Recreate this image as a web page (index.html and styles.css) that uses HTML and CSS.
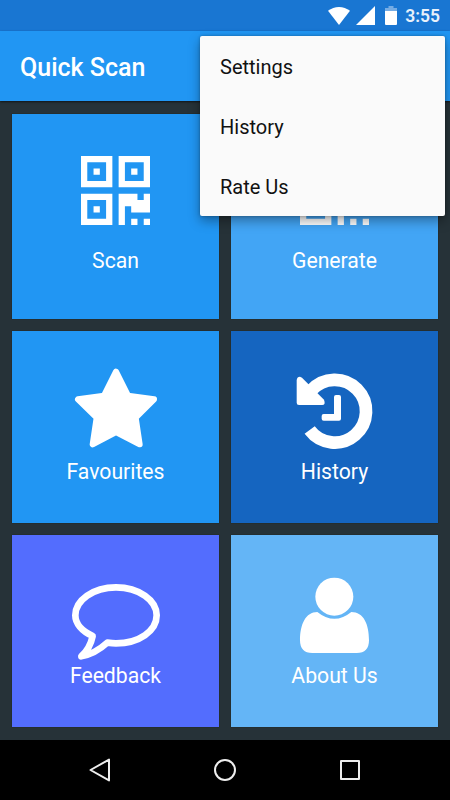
FILE: index.html
```
<!DOCTYPE html>
<html lang="en">
<head>
    <meta charset="UTF-8">
    <meta name="viewport" content="width=device-width, initial-scale=1.0">
    <title>Quick Scan</title>
    <link rel="stylesheet" href="styles.css">
</head>
<body>

    <div class="status-bar">
        <svg class="wifi" viewBox="0 0 22 18"><path d="M11 18 L0 3.8 Q5 0 11 0 T22 3.8 Z"/></svg>
        <svg class="signal" viewBox="0 0 19 19"><path d="M19 0 V19 H0 Z"/></svg>
        <svg class="battery" viewBox="0 0 12 19">
            <path class="faded" d="M3.5 0 H8.5 V2 H12 V5 H0 V2 H3.5 Z"/>
            <path d="M0 5 H12 V18 Q12 19 11 19 H1 Q0 19 0 18 Z"/>
        </svg>
        <span class="clock">3:55</span>
    </div>

    <header class="toolbar">
        <h1>Quick Scan</h1>
    </header>

    <main class="tiles">
        <div class="tile scan">
            <svg class="qr" viewBox="0 0 11 11">
                <path fill-rule="evenodd" d="M0 0h5v5h-5z M1 1v3h3v-3z M2 2h1v1h-1z M6 0h5v5h-5z M7 1v3h3v-3z M8 2h1v1h-1z M0 6h5v5h-5z M1 7v3h3v-3z M2 8h1v1h-1z M6 6h3v1h1v-1h1v3h-3v-1h-1v3h-1z M8 10h1v1h-1z M10 10h1v1h-1z"/>
            </svg>
            <p>Scan</p>
        </div>
        <div class="tile generate">
            <svg class="qr" viewBox="0 0 11 11">
                <path fill-rule="evenodd" d="M0 0h5v5h-5z M1 1v3h3v-3z M2 2h1v1h-1z M6 0h5v5h-5z M7 1v3h3v-3z M8 2h1v1h-1z M0 6h5v5h-5z M1 7v3h3v-3z M2 8h1v1h-1z M6 6h3v1h1v-1h1v3h-3v-1h-1v3h-1z M8 10h1v1h-1z M10 10h1v1h-1z"/>
            </svg>
            <p>Generate</p>
        </div>
        <div class="tile favourites">
            <svg class="icon" viewBox="2 0 330 300">
                <path class="rounded" d="M167 50 L203 122 L281 133 L226 188 L238 268 L167 231 L97 268 L109 188 L53 133 L131 122 Z"/>
            </svg>
            <p>Favourites</p>
        </div>
        <div class="tile history">
            <svg class="icon" viewBox="0 0 330 300">
                <path class="ring" d="M89 225 A94 94 0 1 0 94 106"/>
                <path d="M50 78 Q50 65 60 65 L66 68 L132 134 Q138 150 126 150 H57 Q50 150 50 143 Z"/>
                <path d="M168 120 H177 Q183 120 183 126 V191 Q183 197 177 197 H131 Q125 197 125 191 V183 Q125 177 131 177 H162 V126 Q162 120 168 120 Z"/>
            </svg>
            <p>History</p>
        </div>
        <div class="tile feedback">
            <svg class="icon" viewBox="2 0 330 300">
                <path class="bubble" d="M97 198 C64 183 45 160 45 136 C45 91 98 52 167 52 C236 52 289 91 289 136 C289 183 236 220 167 220 C157 220 149 219 141 218 C117 240 91 254 63 259 C80 244 91 227 97 198 Z"/>
            </svg>
            <p>Feedback</p>
        </div>
        <div class="tile about">
            <svg class="icon" viewBox="0 0 330 300">
                <circle cx="163" cy="80" r="57"/>
                <path d="M112 126 Q163 167 214 126 C251 126 267 163 267 211 Q267 249 230 249 H97 Q60 249 60 211 C60 163 77 126 112 126 Z"/>
            </svg>
            <p>About Us</p>
        </div>
    </main>

    <nav class="nav-bar">
        <svg viewBox="0 0 24 24"><path d="M21 1.6 V22.4 L2.5 12 Z"/></svg>
        <svg viewBox="0 0 24 24"><circle cx="12" cy="12" r="10"/></svg>
        <svg viewBox="0 0 24 24"><rect x="3" y="3" width="18" height="18"/></svg>
    </nav>

    <ul class="menu">
        <li>Settings</li>
        <li>History</li>
        <li>Rate Us</li>
    </ul>

</body>
</html>
```

FILE: styles.css
```
* {
    box-sizing: border-box;
}

body {
    font-family: Roboto, sans-serif;
    background-color: #263238;
    display: flex;
    flex-direction: column;
    height: 800px;
    margin: 0;
    color: #fff;
    overflow: hidden;
}

svg {
    display: block;
    fill: #fff;
}

.status-bar {
    height: 31px;
    background-color: #1976d2;
    display: flex;
    align-items: center;
    justify-content: flex-end;
    padding-right: 10px;
}

.wifi {
    width: 22px;
    height: 18px;
    margin-right: 6px;
}

.signal {
    width: 19px;
    height: 19px;
    margin-right: 10px;
}

.battery {
    width: 12px;
    height: 19px;
    margin-right: 8px;
}

.faded {
    opacity: 0.4;
}

.clock {
    font-size: 17.5px;
    font-weight: 600;
    line-height: 31px;
    padding-top: 2px;
    color: #e8f1fb;
}

.toolbar {
    height: 70px;
    background-color: #2196f3;
    display: flex;
    align-items: center;
    padding: 3px 20px 0;
    box-shadow: 0 1px 2px rgba(0, 0, 0, 0.6);
}

.toolbar h1 {
    font-size: 25px;
    font-weight: 500;
    margin: 0;
}

.tiles {
    flex: 1;
    display: grid;
    grid-template-columns: 207px 207px;
    grid-template-rows: 205px 192px 192px;
    gap: 12px;
    padding: 13px 12px 12px;
}

.tile {
    display: flex;
    flex-direction: column;
    align-items: center;
    box-shadow: 0 0 1px rgba(30, 25, 5, 0.8);
}

.tile p {
    font-size: 21.2px;
    line-height: 26px;
    margin: 0;
}

.scan, .favourites {
    background-color: #2196f3;
}

.generate {
    background-color: #42a5f5;
}

.history {
    background-color: #1565c0;
}

.feedback {
    background-color: #536dfe;
}

.about {
    background-color: #64b5f6;
}

.qr {
    width: 69px;
    height: 69px;
    margin: 42px 0 23px;
}

.icon {
    width: 110px;
    height: 100px;
    margin: 24px 0 4px;
}

.feedback .icon, .about .icon {
    margin: 35px 0 -7px;
}

.rounded {
    stroke: #fff;
    stroke-width: 18;
    stroke-linejoin: round;
}

.ring {
    fill: none;
    stroke: #fff;
    stroke-width: 38;
}

.bubble {
    fill: none;
    stroke: #fff;
    stroke-width: 20;
    stroke-linejoin: round;
}

.nav-bar {
    height: 60px;
    background-color: #000;
    display: flex;
    align-items: center;
    justify-content: center;
    gap: 101px;
}

.nav-bar svg {
    width: 24px;
    height: 24px;
    fill: none;
    stroke: #eee;
    stroke-width: 2;
    stroke-linejoin: round;
}

/* overflow menu, opens over the toolbar and tiles */
.menu {
    position: absolute;
    top: 36px;
    right: 5px;
    width: 245px;
    height: 180px;
    margin: 0;
    padding: 0 20px;
    list-style: none;
    color: #111;
    background-color: #fafafa;
    border-radius: 2px;
    box-shadow: 0 5px 12px rgba(0, 0, 0, 0.35), 0 0 3px rgba(0, 0, 0, 0.3);
}

.menu li {
    font-size: 20px;
    line-height: 60px;
    padding-top: 1px;
    height: 60px;
}
```
